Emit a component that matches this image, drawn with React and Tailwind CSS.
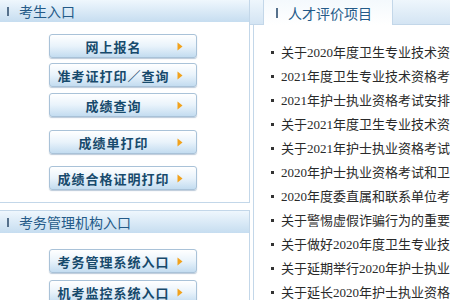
import React from "react";

const Arrow = () => (
  <svg width="6" height="9" viewBox="0 0 6 9" className="shrink-0">
    <path d="M0.5 0.5 L5.5 4.5 L0.5 8.5 Z" fill="#f2a21c" />
  </svg>
);

const Btn = ({ label, mt }) => (
  <div
    className={`${mt} w-[148px] h-[24px] rounded-[3px] border border-[#a9c2d8] bg-gradient-to-b from-[#ffffff] via-[#e9f3fb] to-[#c3dcf0] shadow-[0_1px_1px_rgba(120,150,180,0.5)] flex items-center pr-[13px]`}
  >
    <div className="flex-1 text-center text-[13px] font-bold tracking-[1px] text-[#174a6c] leading-none whitespace-nowrap">
      {label}
    </div>
    <Arrow />
  </div>
);

const Header = ({ title }) => (
  <div className="h-[22px] bg-gradient-to-b from-[#eff7fd] to-[#c6ddf0] flex items-center pl-[7px]">
    <span className="w-[2px] h-[9px] bg-[#56718c] mr-[10px]" />
    <span className="text-[14px] text-[#245a88] leading-none whitespace-nowrap">{title}</span>
  </div>
);

const items = [
  "关于2020年度卫生专业技术资格考试",
  "2021年度卫生专业技术资格考试报名",
  "2021年护士执业资格考试安排",
  "关于2021年度卫生专业技术资格考试",
  "关于2021年护士执业资格考试报名",
  "2020年护士执业资格考试和卫生",
  "2020年度委直属和联系单位考试",
  "关于警惕虚假诈骗行为的重要提示",
  "关于做好2020年度卫生专业技术",
  "关于延期举行2020年护士执业资格",
  "关于延长2020年护士执业资格考试",
];

export default function App() {
  return (
    <div className="w-[450px] h-[300px] overflow-hidden bg-white flex font-['Noto_Sans_CJK_SC',sans-serif]">
      <div className="w-[250px] shrink-0 flex flex-col">
        <div className="border-r border-b border-[#c3d7e9]">
          <Header title="考生入口" />
          <div className="pl-[49px] pt-[12px] pb-[12px] flex flex-col bg-white">
            <Btn label="网上报名" mt="mt-0" />
            <Btn label="准考证打印／查询" mt="mt-[5px]" />
            <Btn label="成绩查询" mt="mt-[6px]" />
            <Btn label="成绩单打印" mt="mt-[13px]" />
            <Btn label="成绩合格证明打印" mt="mt-[12px]" />
          </div>
        </div>
        <div className="mt-[7px] border-r border-t border-[#c3d7e9] flex-1">
          <Header title="考务管理机构入口" />
          <div className="pl-[49px] pt-[16px] flex flex-col">
            <Btn label="考务管理系统入口" mt="mt-0" />
            <Btn label="机考监控系统入口" mt="mt-[7px]" />
          </div>
        </div>
      </div>
      <div className="flex-1 min-w-0 flex flex-col">
        <div className="h-[25px] flex bg-gradient-to-b from-[#eef6fc] to-[#d3e4f3]">
          <div className="w-[13px] border-b border-[#c3d7e9]" />
          <div className="w-[130px] border-l border-r border-[#c3d7e9] bg-gradient-to-b from-[#f4f9fd] to-[#ffffff] flex items-center pl-[12px]">
            <span className="w-[2px] h-[10px] bg-[#56718c] mr-[10px]" />
            <span className="text-[14px] text-[#245a88] leading-none whitespace-nowrap">人才评价项目</span>
          </div>
          <div className="flex-1 border-b border-[#c3d7e9]" />
        </div>
        <div className="flex-1 ml-[3px] border-l border-[#c3d7e9] pt-[15px] pl-[17px] overflow-hidden">
          {items.map((t) => (
            <div key={t} className="h-[24px] flex items-center whitespace-nowrap">
              <span className="w-[3px] h-[3px] bg-[#333] mr-[7px] shrink-0" />
              <span className="text-[13px] text-[#2a2a2a] leading-none font-['Liberation_Serif','Noto_Sans_CJK_SC',serif]">{t}</span>
            </div>
          ))}
        </div>
      </div>
    </div>
  );
}
